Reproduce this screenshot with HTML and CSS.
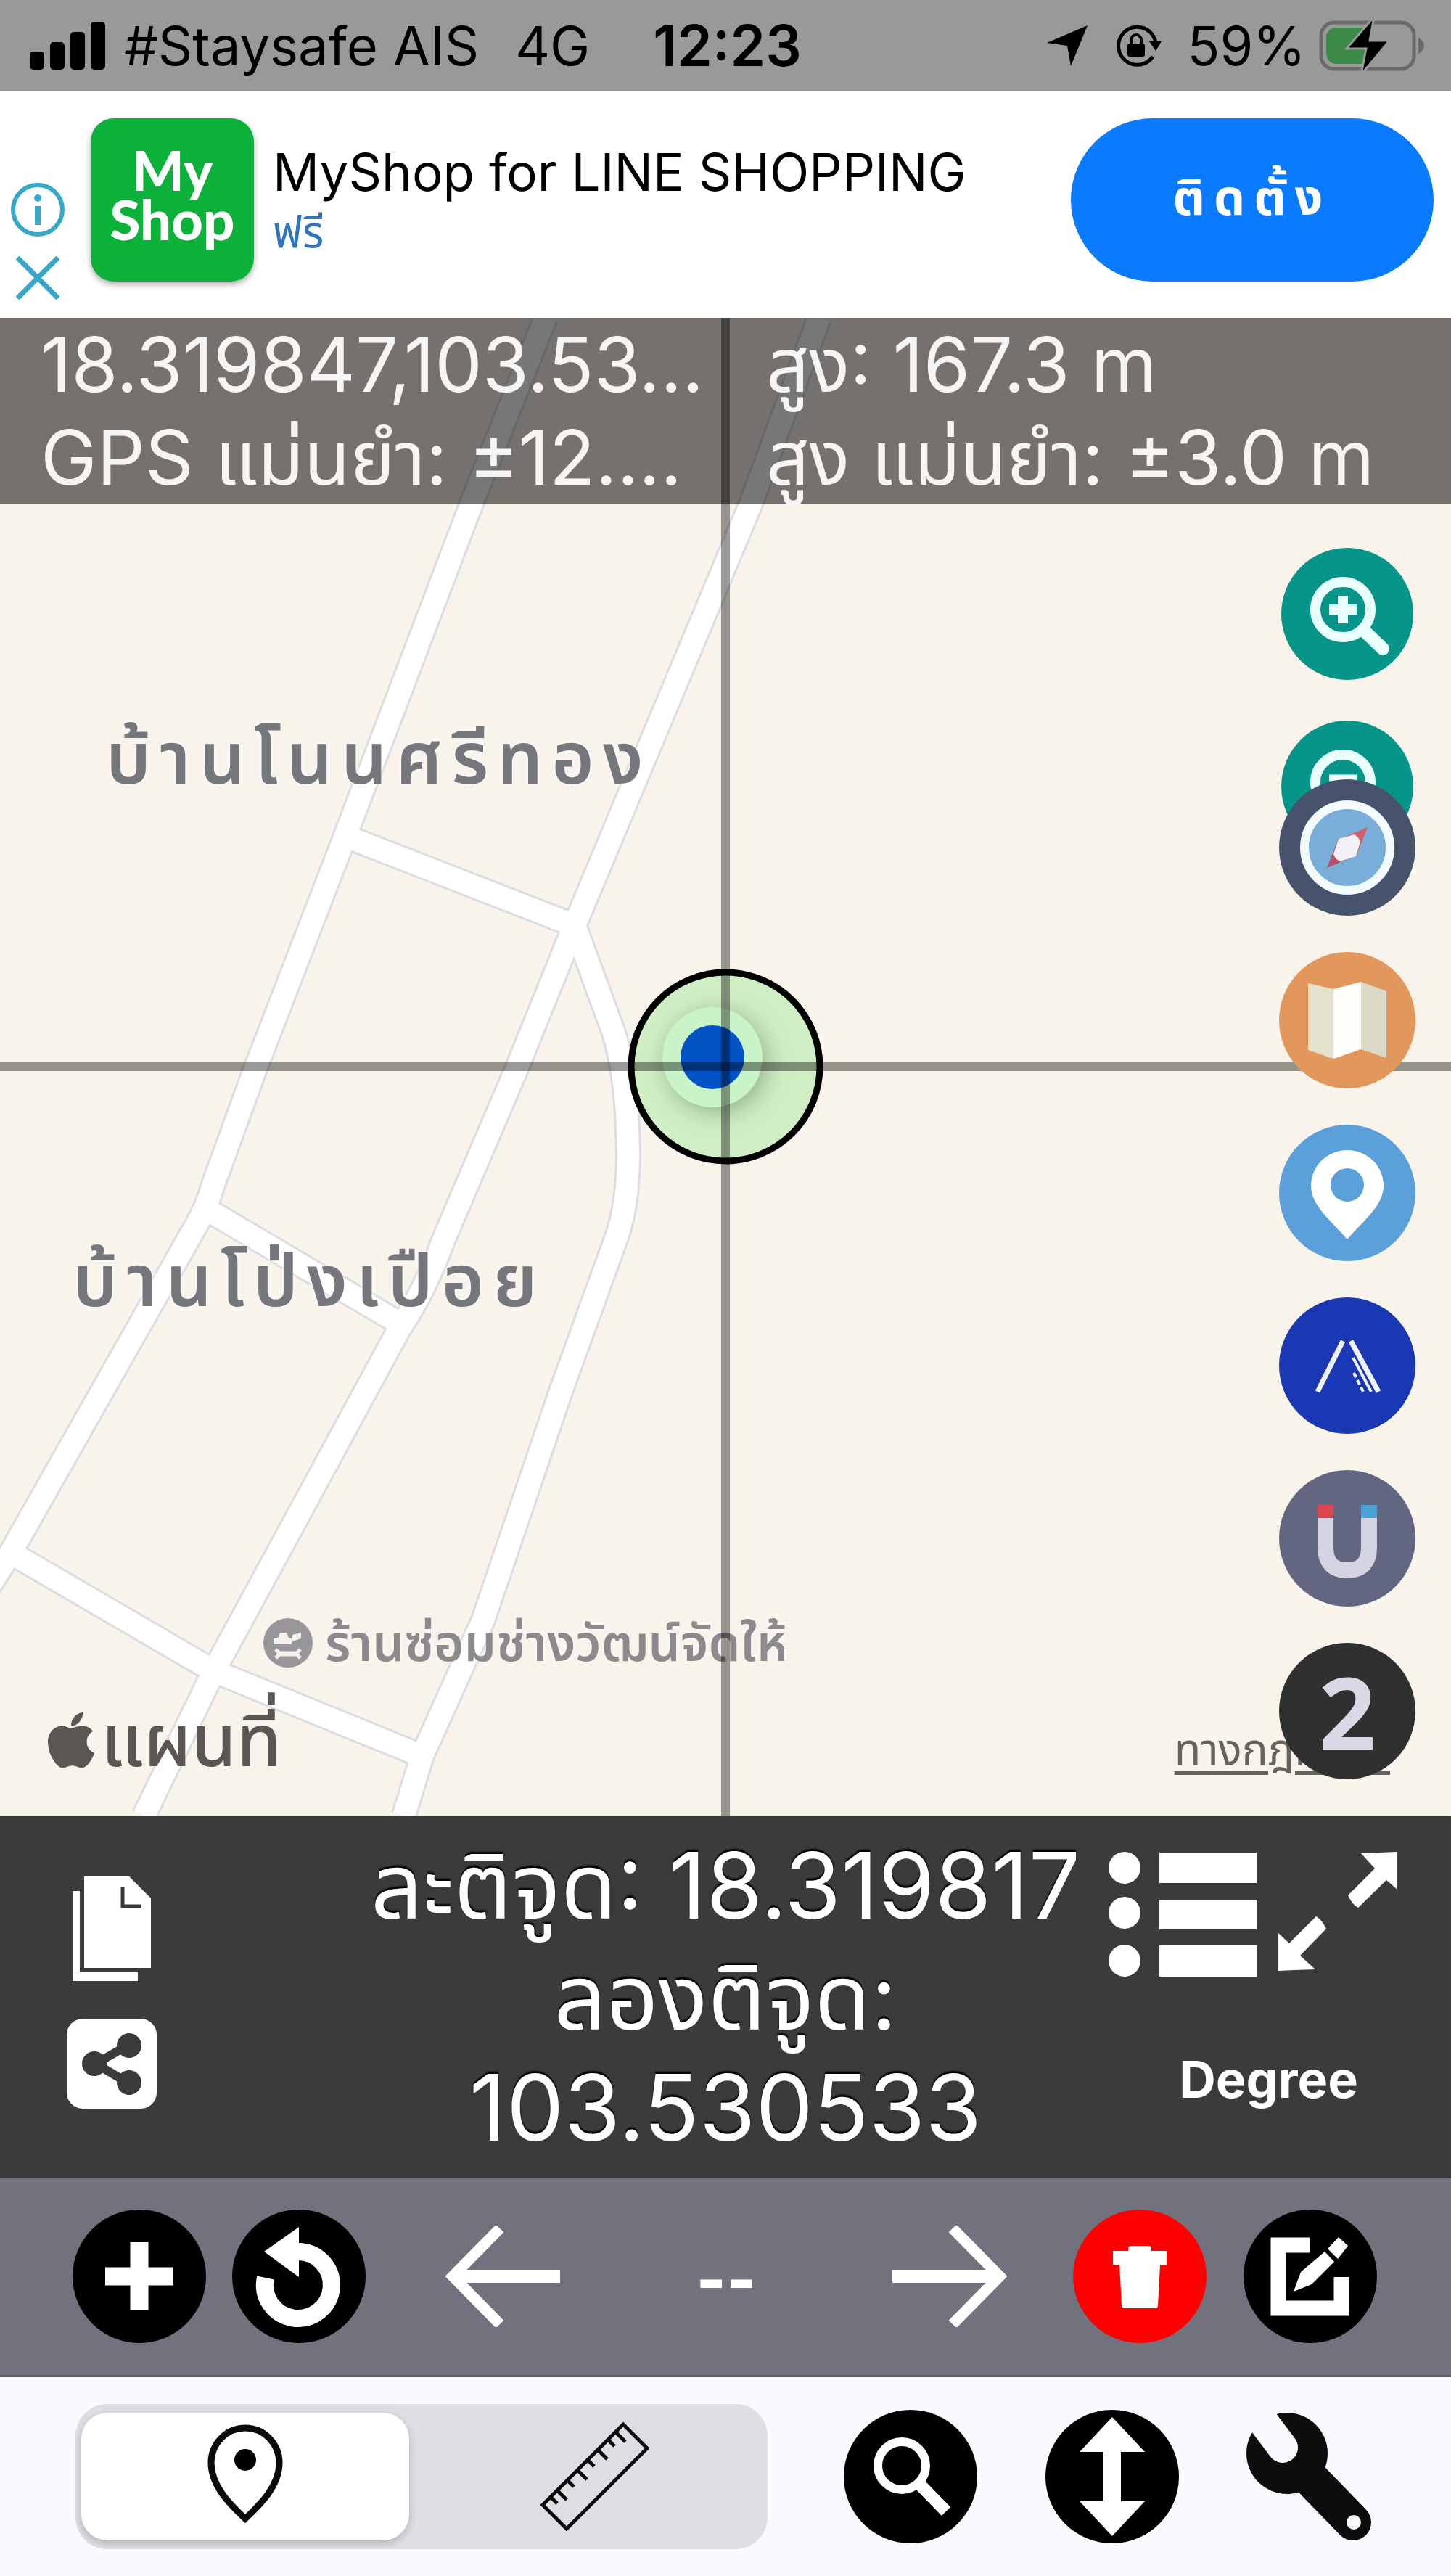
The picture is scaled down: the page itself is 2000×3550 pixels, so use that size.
FILE: index.html
```html
<!DOCTYPE html>
<html lang="th">
<head>
<meta charset="utf-8">
<title>GPS</title>
<meta name="viewport" content="width=device-width, initial-scale=1">
<link rel="stylesheet" href="styles.css">
</head>
<body>
<div class="app">

  <header class="status">
    <div class="status-side">
      <svg class="signal" viewBox="0 0 104 66" aria-hidden="true"><rect x="0" y="41" width="20" height="25" rx="5"/><rect x="28" y="28" width="20" height="38" rx="5"/><rect x="56" y="14" width="20" height="52" rx="5"/><rect x="84" y="0" width="20" height="66" rx="5"/></svg>
      <span>#Staysafe AIS</span>
      <span class="network">4G</span>
    </div>
    <strong class="clock">12:23</strong>
    <div class="status-side status-end">
      <svg class="locate" viewBox="0 0 58 58" aria-hidden="true"><path d="M57 1 34 57 29 29 1 25z"/></svg>
      <svg class="rotation" viewBox="0 0 68 60" aria-hidden="true"><path d="M51 11a26 26 0 1 0 4 34" fill="none" stroke="#000" stroke-width="5"/><path d="M50 24h17l-8 13z"/><path d="M46 7q12 8 13 20" fill="none" stroke="#000" stroke-width="5"/><rect x="20" y="27" width="24" height="18" rx="3"/><path d="M25 28v-6a7 7 0 0 1 14 0v6" fill="none" stroke="#000" stroke-width="4"/></svg>
      <span>59%</span>
      <svg class="battery" viewBox="0 0 146 80" aria-hidden="true"><rect x="3" y="8" width="128" height="64" rx="18" fill="none" stroke="#6a6a6a" stroke-width="5"/><path d="M24 15h46v50H24a14 14 0 0 1-14-14V29a14 14 0 0 1 14-14z" fill="#3c8a48"/><path d="M137 29q8 4 8 11t-8 11z" fill="#6a6a6a"/><path d="M76 0 38 44h27L58 80l39-47H70z" stroke="#999" stroke-width="3"/></svg>
    </div>
  </header>

  <section class="ad">
    <div class="ad-marks">
      <button class="plain" aria-label="info"><svg viewBox="0 0 76 76"><circle cx="38" cy="38" r="34" fill="none" stroke="#36a9c9" stroke-width="6"/><circle cx="38" cy="22" r="5" fill="#36a9c9"/><path d="M38 33v26" stroke="#36a9c9" stroke-width="8"/></svg></button>
      <button class="plain" aria-label="close"><svg viewBox="0 0 76 76"><path d="m10 10 56 56M66 10 10 66" stroke="#36a9c9" stroke-width="7"/></svg></button>
    </div>
    <div class="ad-logo"><span>My</span><span>Shop</span></div>
    <div class="ad-text">
      <h1>MyShop for LINE SHOPPING</h1>
      <p>ฟรี</p>
    </div>
    <button class="cta">ติดตั้ง</button>
  </section>

  <main class="map">
    <svg class="roads" viewBox="0 438 2000 2063" preserveAspectRatio="xMidYMid slice" aria-hidden="true">
      <defs>
        <g id="net">
          <path d="M752 438 650 694 476 1152 352 1473 295 1630Q285 1666 264 1700L15 2139-30 2210"/>
          <path d="M1129 438 1035 694 792 1275 712 1473 612 1707Q585 1780 551 1830L295 2302 199 2501"/>
          <path d="M792 1275 845 1420Q865 1480 866 1590 866 1660 849 1707L773 1917 666 2232 582 2419 557 2501"/>
          <path d="M476 1152 792 1275M285 1666 551 1823M15 2139 295 2302 582 2419"/>
        </g>
      </defs>
      <use href="#net" class="road-edge"/>
      <use href="#net" class="road-fill"/>
    </svg>

    <span class="place place-a">บ้านโนนศรีทอง</span>
    <span class="place place-b">บ้านโป่งเปือย</span>
    <span class="poi"><svg viewBox="0 0 68 68" aria-hidden="true"><circle cx="34" cy="34" r="34" fill="#98969a"/><path d="M14 36v-8l6-1 3-7h9l3 7 4 1v8zM40 32v-9l12-3v8z" fill="#f5f2ee"/><path d="m17 43 5 5h24l5-5M17 55l5-5h24l5 5" fill="none" stroke="#f5f2ee" stroke-width="5"/></svg>ร้านซ่อมช่างวัฒน์จัดให้</span>
    <span class="brand"><svg viewBox="0 20 384 470" aria-hidden="true"><path d="M318.700 268.700c-.2-36.700 16.400-64.400 50-84.800-18.800-26.900-47.200-41.700-84.700-44.600-35.500-2.800-74.300 20.700-88.500 20.700-15 0-49.400-19.700-76.400-19.700C63.300 141.200 4 184.800 4 273.500q0 39.300 14.400 81.200c12.800 36.700 59 126.700 107.200 125.200 25.200-.6 43-17.900 75.800-17.900 31.800 0 48.300 17.900 76.400 17.900 48.600-.7 90.400-82.500 102.600-119.300-65.200-30.700-61.700-90-61.700-91.900zm-56.600-164.200c27.300-32.400 24.800-61.900 24-72.500-24.100 1.400-52 16.400-67.900 34.900-17.500 19.800-27.800 44.300-25.600 71.900 26.100 2 49.900-11.400 69.500-34.300z"/></svg>แผนที่</span>
    <a class="legal" href="#">ทางกฎหมาย</a>

    <svg class="target" viewBox="0 0 280 280" aria-hidden="true">
      <defs><radialGradient id="shade"><stop offset=".6" stop-color="#8fae88"/><stop offset="1" stop-color="#cdeec3" stop-opacity="0"/></radialGradient></defs>
      <circle cx="140" cy="140" r="130" fill="#cfeec4"/>
      <circle cx="128" cy="134" r="104" fill="url(#shade)" opacity=".6"/>
      <circle cx="122" cy="127" r="69" fill="#c9f3c9"/>
      <circle cx="122" cy="127" r="44" fill="#0254c6"/>
      <circle cx="140" cy="140" r="130" fill="none" stroke="#000" stroke-width="9"/>
    </svg>
    <i class="cross cross-x"></i>
    <i class="cross cross-y"></i>

    <div class="readout">
      <div><p>18.319847,103.53...</p><p>GPS แม่นยำ: ±12....</p></div>
      <div><p>สูง: 167.3 m</p><p>สูง แม่นยำ: ±3.0 m</p></div>
    </div>

    <nav class="tools">
      <button class="round zoom" aria-label="zoom in"><svg viewBox="0 0 188 188"><circle cx="94" cy="94" r="91" fill="#079489"/><g fill="none" stroke="#e9fffc"><circle cx="88" cy="88" r="38" stroke-width="14"/><path d="m118 118 25 24" stroke-width="18" stroke-linecap="round"/><path d="M69 88h38M88 69v38" stroke-width="14"/></g></svg></button>
      <button class="round zoom" aria-label="zoom out"><svg viewBox="0 0 188 188"><circle cx="94" cy="94" r="91" fill="#079489"/><g fill="none" stroke="#e9fffc"><circle cx="88" cy="88" r="38" stroke-width="14"/><path d="m118 118 25 24" stroke-width="18" stroke-linecap="round"/><path d="M69 82h38" stroke-width="9"/></g></svg></button>
      <button class="round compass" aria-label="compass"><svg viewBox="0 0 188 188"><circle cx="94" cy="94" r="94" fill="#47526c"/><circle cx="94" cy="94" r="59" fill="#78aed9" stroke="#f4fbff" stroke-width="12"/><path d="m122 66-16 41-24-24z" fill="#d15f6c"/><path d="m66 122 16-41 24 24z" fill="#b8506a"/><path d="m82 82 22-6q6 4 8 10l-6 20-22 7q-7-3-9-10z" fill="#f2f2f6"/></svg></button>
      <button class="round" aria-label="map type"><svg viewBox="0 0 188 188"><circle cx="94" cy="94" r="94" fill="#e2975c"/><path d="m40 43 35 8v96l-35-12z" fill="#e4e1cd"/><path d="m75 51 38-10v93l-38 13z" fill="#fffefb"/><path d="m113 41 35 13v92l-35-12z" fill="#dcdac6"/></svg></button>
      <button class="round" aria-label="marker"><svg viewBox="0 0 188 188"><circle cx="94" cy="94" r="94" fill="#5b9fdb"/><path fill-rule="evenodd" d="M94 158C72 132 44 112 44 84a50 49 0 0 1 100 0c0 28-28 48-50 74zm0-98a23 23 0 1 0 0 46 23 23 0 0 0 0-46z" fill="#fff"/></svg></button>
      <button class="round" aria-label="road"><svg viewBox="0 0 188 188"><circle cx="94" cy="94" r="94" fill="#1a38b4"/><g fill="none" stroke="#eef4ff"><path d="M53 130 88 60" stroke-width="7"/><path d="m99 60 38 70" stroke-width="7"/><path d="m102 83 25 47" stroke-width="4"/><path d="m103 104 13 26" stroke-width="4" stroke-dasharray="7 4"/></g></svg></button>
      <button class="round" aria-label="magnet"><svg viewBox="0 0 188 188"><circle cx="94" cy="94" r="94" fill="#626680"/><path d="M64 64v42q0 32 30 32t30-32V64" fill="none" stroke="#d3d3e2" stroke-width="22"/><path d="M53 48h22v18H53z" fill="#dc4650"/><path d="M113 48h22v18h-22z" fill="#4ba3d6"/></svg></button>
      <button class="round two">2</button>
    </nav>
  </main>

  <section class="panel">
    <div class="panel-left">
      <button class="plain copy" aria-label="copy"><svg viewBox="0 0 108 144"><path d="M0 20h10v112h80v12H0z" fill="#fff"/><path d="M16 0h62l30 30v96H16z" fill="#fff"/><path d="M69 14v27h26" fill="none" stroke="#3b3b3b" stroke-width="5"/></svg></button>
      <button class="plain share" aria-label="share"><svg viewBox="0 0 124 124"><rect width="124" height="124" rx="22" fill="#fff"/><path d="M87 35 40 62l47 28" fill="none" stroke="#3b3b3b" stroke-width="12"/><g fill="#3b3b3b"><circle cx="86" cy="37" r="17"/><circle cx="38" cy="62" r="17"/><circle cx="86" cy="88" r="17"/></g></svg></button>
    </div>
    <p class="coords">ละติจูด: 18.319817<br>ลองติจูด:<br>103.530533</p>
    <div class="panel-right">
      <div class="panel-icons">
        <button class="plain list" aria-label="list"><svg viewBox="0 0 204 172"><g fill="#fff"><circle cx="22" cy="22" r="22"/><circle cx="22" cy="84" r="22"/><circle cx="22" cy="150" r="22"/><path d="M70 1h134v42H70zM70 66h134v41H70zM70 129h134v43H70z"/></g></svg></button>
        <button class="plain expand" aria-label="full screen"><svg viewBox="0 0 164 164"><path d="M164 0v52l-15-13-39 38q-8-4-14-17l37-37L114 2zM0 164v-52l15 14 37-37q8 4 14 17l-36 37 21 19z" fill="#fff"/></svg></button>
      </div>
      <button class="plain unit">Degree</button>
    </div>
  </section>

  <section class="bar">
    <div class="bar-left">
      <button class="round" aria-label="add"><svg viewBox="0 0 184 184"><circle cx="92" cy="92" r="92"/><path d="M45 92h94M92 45v94" stroke="#fff" stroke-width="25"/></svg></button>
      <button class="round" aria-label="undo"><svg viewBox="0 0 184 184"><circle cx="92" cy="92" r="92"/><path d="M91 58a46 46 0 1 1-45 36" fill="none" stroke="#fff" stroke-width="24"/><path d="M92 24v69L44 58z" fill="#fff"/></svg></button>
    </div>
    <div class="bar-mid">
      <button class="plain arrow" aria-label="previous"><svg viewBox="0 0 158 140"><path d="M158 70H12M75 4 10 70l65 66" fill="none" stroke="#fff" stroke-width="15"/><path d="M158 61v18H20V61z" fill="#fff"/></svg></button>
      <span class="dashes">--</span>
      <button class="plain arrow" aria-label="next"><svg viewBox="0 0 158 140"><path d="M0 70h146M83 4l65 66-65 66" fill="none" stroke="#fff" stroke-width="15"/><path d="M0 61v18h138V61z" fill="#fff"/></svg></button>
    </div>
    <div class="bar-right">
      <button class="round" aria-label="delete"><svg viewBox="0 0 184 184"><circle cx="92" cy="92" r="92" fill="#fe0000"/><path d="M76 54q0-4 4-4h24q4 0 4 4v3h21v19h-9l-3 56q0 4-4 4H71q-4 0-4-4l-3-56h-9V57h21z" fill="#fff"/></svg></button>
      <button class="round" aria-label="edit"><svg viewBox="0 0 184 184"><circle cx="92" cy="92" r="92"/><path d="M91 49H48v87h87V93" fill="none" stroke="#fff" stroke-width="21"/><path d="m69 113 10-27 33-28 13 14-31 31zM116 54l15-16 13 12-14 18z" fill="#fff"/></svg></button>
    </div>
  </section>

  <footer class="tabs">
    <div class="segmented">
      <button class="seg seg-on" aria-label="point"><svg viewBox="0 0 110 136"><path d="M55 130C36 112 8 86 8 53a47 48 0 0 1 94 0c0 33-28 59-47 77z" fill="none" stroke="#0a0a0a" stroke-width="9"/><circle cx="55" cy="49" r="15"/></svg></button>
      <button class="seg seg-off" aria-label="ruler"><svg viewBox="0 0 150 150"><path d="M114 3 147 36 36 147 3 114zM23 94l13 13M37 80l9 9M51 66l13 13M65 52l9 9M79 38l13 13M93 24l9 9M14 103l9 9M104 14l13 13" fill="none" stroke="#0a0a0a" stroke-width="5"/></svg></button>
    </div>
    <button class="round" aria-label="search"><svg viewBox="0 0 184 184"><circle cx="92" cy="92" r="92"/><circle cx="80" cy="77" r="33" fill="none" stroke="#fff" stroke-width="12"/><path d="m103 101 38 39" stroke="#fff" stroke-width="17"/></svg></button>
    <button class="round" aria-label="height"><svg viewBox="0 0 184 184"><circle cx="92" cy="92" r="92"/><path d="m92 10 45 48h-33v68h33l-45 48-45-48h33V58H47z" fill="#fff"/></svg></button>
    <button class="plain wrench" aria-label="settings"><svg viewBox="0 0 176 182"><defs><mask id="jaw" maskUnits="userSpaceOnUse" x="0" y="0" width="176" height="182"><path d="M0 0h176v182H0z" fill="#fff"/><path d="M-5-22 50 51" stroke="#000" stroke-width="42" stroke-linecap="round"/><circle cx="148" cy="154" r="10"/></mask></defs><g mask="url(#jaw)" fill="#0d0d0e"><circle cx="56" cy="59" r="56"/><path d="m80 85 67 69" stroke="#0d0d0e" stroke-width="50" stroke-linecap="round"/></g></svg></button>
  </footer>
</div>
</body>
</html>
```
FILE: styles.css
```css
* { box-sizing: border-box; }
body { margin: 0; font-family: Inter, "Noto Sans Thai", "Noto Sans", sans-serif; color: #000; background: #fff; }
p, h1 { margin: 0; font-weight: 400; }
svg { display: block; width: 100%; height: 100%; }
button { font: inherit; color: inherit; border: 0; padding: 0; background: none; flex: none; }
.app { display: flex; flex-direction: column; min-height: 100vh; }

/* status bar */
.status { display: grid; grid-template-columns: 1fr auto 1fr; align-items: center; height: 125px; padding: 0 36px 0 41px; background: #999; font-size: 74px; line-height: 80px; }
.status-side { display: flex; align-items: center; gap: 26px; white-space: nowrap; }
.status-end { justify-content: flex-end; gap: 18px; }
.signal { width: 104px; height: 66px; }
.network { margin-left: 24px; }
.clock { font-size: 78px; font-weight: 600; }
.locate { width: 58px; height: 58px; margin-right: 16px; }
.rotation { width: 68px; height: 60px; margin-right: 16px; }
.battery { width: 146px; height: 80px; }

/* advert */
.ad { display: flex; align-items: center; height: 313px; padding: 0 24px 12px 14px; background: #fff; }
.ad-marks { display: flex; flex-direction: column; gap: 18px; padding-top: 120px; margin-right: 35px; }
.ad-marks button { width: 76px; height: 76px; }
.ad-logo { display: flex; flex-direction: column; align-items: center; justify-content: center; width: 225px; height: 225px; border-radius: 32px; background: #0bb138; box-shadow: 0 4px 8px #0005; color: #fff; font: 900 76px/68px Lato, sans-serif; padding-bottom: 16px; }
.ad-text { flex: 1; height: 225px; padding: 32px 0 0 26px; white-space: nowrap; }
.ad-text h1 { font-size: 71px; line-height: 84px; }
.ad-text p { font-size: 60px; line-height: 80px; color: #2f74bd; }
.cta { width: 500px; height: 225px; border-radius: 113px; background: #0a7aff; color: #fff; font-size: 68px; font-weight: 700; letter-spacing: 12px; }

/* map */
.map { position: relative; flex: 1; min-height: 2040px; overflow: hidden; background: #f8f3eb; }
.roads { position: absolute; inset: 0; }
.road-edge, .road-fill { fill: none; stroke-linejoin: round; }
.road-edge { stroke: #dcdde1; stroke-width: 36px; }
.road-fill { stroke: #fff; stroke-width: 30px; }
.place, .poi, .brand, .legal { position: absolute; white-space: nowrap; }
.place { color: #75777c; font-size: 100px; font-weight: 600; line-height: 120px; letter-spacing: 12px; text-shadow: 0 0 6px #fff; }
.place-a { left: 146px; top: 546px; }
.place-b { left: 100px; top: 1266px; }
.poi { display: flex; align-items: center; gap: 17px; left: 363px; top: 1784px; color: #8c8a8c; font-size: 70px; font-weight: 600; line-height: 84px; text-shadow: 0 0 5px #fff; }
.poi svg { width: 68px; height: 68px; }
.brand { display: flex; align-items: center; gap: 8px; left: 65px; bottom: 44px; color: #5a5653; font-size: 100px; font-weight: 500; line-height: 120px; }
.brand svg { width: 66px; height: 80px; fill: #5a5653; }
.legal { right: 84px; bottom: 56px; color: #66625e; font-size: 60px; line-height: 72px; text-underline-offset: 8px; }
.target { position: absolute; left: calc(50% - 140px); top: calc(50% - 140px); width: 280px; height: 280px; }
.cross { position: absolute; background: #0006; }
.cross-x { left: 0; right: 0; top: calc(50% - 6px); height: 12px; }
.cross-y { top: 0; bottom: 0; left: calc(50% - 6px); width: 12px; }
.readout { position: relative; display: grid; grid-template-columns: 1fr 1fr; height: 256px; background: #0008; color: #f7f5f4; font-size: 104px; line-height: 128px; white-space: nowrap; }
.readout div { min-width: 0; padding-left: 56px; }
.tools { position: absolute; right: 49px; bottom: 50px; display: flex; flex-direction: column; gap: 50px; }
.round { width: 184px; height: 184px; border-radius: 50%; }
.tools .round { width: 188px; height: 188px; }
.tools .compass { margin-top: -154px; }
.two { background: #2f3030; color: #d9d9e6; font: 700 138px/188px "Open Sans", sans-serif; }

/* coordinates */
.panel { display: grid; grid-template-columns: 380px 1fr 398px; padding: 20px 74px 20px 92px; background: #3b3b3b; color: #fff; }
.panel-left { display: flex; flex-direction: column; gap: 52px; padding-top: 64px; }
.copy { width: 108px; height: 144px; margin-left: 8px; }
.share { width: 124px; height: 124px; }
.coords { text-align: center; font-size: 126px; line-height: 153px; white-space: nowrap; text-shadow: 0 -3px 2px #000; }
.panel-right { display: flex; flex-direction: column; gap: 102px; padding-top: 30px; }
.panel-icons { display: flex; justify-content: space-between; width: 100%; }
.list { width: 204px; height: 172px; }
.expand { width: 164px; height: 164px; }
.unit { align-self: flex-end; margin-right: 54px; font-size: 70px; font-weight: 700; line-height: 80px; }

/* action bar */
.bar { display: flex; align-items: center; height: 275px; padding: 0 102px 0 100px; background: #71727d; border-bottom: 3px solid #56585e; color: #fff; }
.bar-left, .bar-right { display: flex; gap: 36px; }
.bar-right { gap: 51px; }
.bar-mid { display: flex; flex: 1; align-items: center; justify-content: space-between; margin: 0 91px 0 110px; }
.arrow { width: 158px; height: 140px; }
.dashes { padding-top: 8px; font-size: 88px; font-weight: 800; line-height: 100px; }

/* bottom tabs */
.tabs { display: flex; align-items: center; justify-content: space-between; height: 274px; padding: 0 106px 0 104px; background: #f9f9fe; }
.segmented { display: flex; width: 954px; height: 200px; margin-right: 12px; padding: 12px 8px; border-radius: 44px; background: #dedee3; }
.seg { display: flex; align-items: center; justify-content: center; border-radius: 36px; }
.seg svg { width: 150px; height: 150px; }
.seg-on { width: 452px; padding-bottom: 8px; background: #fff; box-shadow: 0 4px 12px #0003; }
.seg-on svg { width: 110px; height: 136px; }
.seg-off { flex: 1; padding-left: 26px; }
.wrench { width: 176px; height: 182px; }
```
